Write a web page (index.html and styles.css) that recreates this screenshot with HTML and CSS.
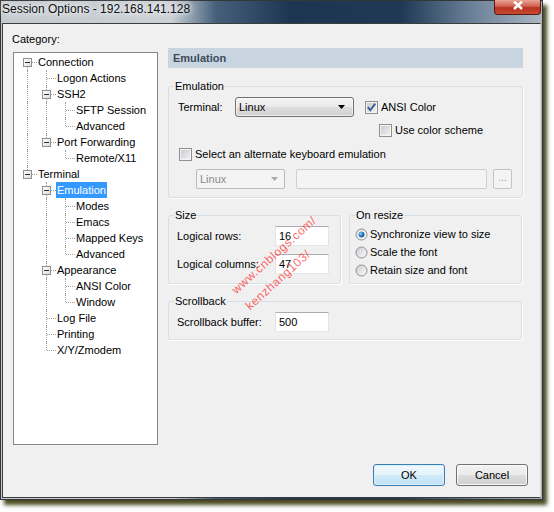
FILE: index.html
```html
<!DOCTYPE html>
<html>
<head>
<meta charset="utf-8">
<link rel="stylesheet" href="styles.css">
</head>
<body>
<svg class="defs" width="0" height="0" aria-hidden="true">
  <defs>
    <linearGradient id="rg" x1="0" y1="0" x2="1" y2="1">
      <stop offset="0" stop-color="#c9ccd1"/>
      <stop offset="1" stop-color="#fbfbfb"/>
    </linearGradient>
    <radialGradient id="rd" cx="0.35" cy="0.35" r="0.75">
      <stop offset="0" stop-color="#8fd3f5"/>
      <stop offset="0.5" stop-color="#2b7fc0"/>
      <stop offset="1" stop-color="#0e3f78"/>
    </radialGradient>
  </defs>
</svg>
<div class="screen">
  <div class="window">
    <div class="titlebar">
      <div class="title">Session Options - 192.168.141.128</div>
      <div class="close">
        <svg width="12" height="9" viewBox="0 0 12 9"><path d="M2 0.5 L10 8 M10 0.5 L2 8" stroke="#fff" stroke-width="2.4" fill="none"/></svg>
      </div>
    </div>
    <div class="client">
      <div class="main">
        <div class="left">
          <div class="cat">Category:</div>
          <div class="tree">
            <div class="trow"><span class="c f"><span class="box"></span></span><span class="tl">Connection</span></div>
            <div class="trow"><span class="c v"></span><span class="c t"></span><span class="tl">Logon Actions</span></div>
            <div class="trow"><span class="c v"></span><span class="c t"><span class="box"></span></span><span class="tl">SSH2</span></div>
            <div class="trow"><span class="c v"></span><span class="c v"></span><span class="c t"></span><span class="tl">SFTP Session</span></div>
            <div class="trow"><span class="c v"></span><span class="c v"></span><span class="c e"></span><span class="tl">Advanced</span></div>
            <div class="trow"><span class="c v"></span><span class="c e"><span class="box"></span></span><span class="tl">Port Forwarding</span></div>
            <div class="trow"><span class="c v"></span><span class="c"></span><span class="c e"></span><span class="tl">Remote/X11</span></div>
            <div class="trow"><span class="c e"><span class="box"></span></span><span class="tl">Terminal</span></div>
            <div class="trow"><span class="c"></span><span class="c t"><span class="box"></span></span><span class="tl sel">Emulation</span></div>
            <div class="trow"><span class="c"></span><span class="c v"></span><span class="c t"></span><span class="tl">Modes</span></div>
            <div class="trow"><span class="c"></span><span class="c v"></span><span class="c t"></span><span class="tl">Emacs</span></div>
            <div class="trow"><span class="c"></span><span class="c v"></span><span class="c t"></span><span class="tl">Mapped Keys</span></div>
            <div class="trow"><span class="c"></span><span class="c v"></span><span class="c e"></span><span class="tl">Advanced</span></div>
            <div class="trow"><span class="c"></span><span class="c t"><span class="box"></span></span><span class="tl">Appearance</span></div>
            <div class="trow"><span class="c"></span><span class="c v"></span><span class="c t"></span><span class="tl">ANSI Color</span></div>
            <div class="trow"><span class="c"></span><span class="c v"></span><span class="c e"></span><span class="tl">Window</span></div>
            <div class="trow"><span class="c"></span><span class="c t"></span><span class="tl">Log File</span></div>
            <div class="trow"><span class="c"></span><span class="c t"></span><span class="tl">Printing</span></div>
            <div class="trow"><span class="c"></span><span class="c e"></span><span class="tl">X/Y/Zmodem</span></div>
          </div>
        </div>
        <div class="right">
          <div class="header">Emulation</div>

          <fieldset class="grp emu">
            <legend>Emulation</legend>
            <div class="row r1">
              <span class="lbl-term">Terminal:</span>
              <div class="combo"><span>Linux</span>
                <svg width="7" height="4" viewBox="0 0 7 4"><path d="M0 0 H7 L3.5 4 Z" fill="#000"/></svg>
              </div>
              <span class="chk">
                <svg width="11" height="11" viewBox="0 0 11 11"><path d="M1.8 5.2 L4.3 8.2 L9.2 1.6" stroke="#3d5a96" stroke-width="1.9" fill="none"/></svg>
              </span>
              <span>ANSI Color</span>
            </div>
            <div class="row r2">
              <span class="chk"></span><span>Use color scheme</span>
            </div>
            <div class="row r3">
              <span class="chk"></span><span>Select an alternate keyboard emulation</span>
            </div>
            <div class="row r4">
              <div class="dcombo"><span>Linux</span>
                <svg width="7" height="4" viewBox="0 0 7 4"><path d="M0 0 H7 L3.5 4 Z" fill="#a8a8a8"/></svg>
              </div>
              <div class="dtext"></div>
              <div class="dots">...</div>
            </div>
          </fieldset>

          <div class="pair">
            <fieldset class="grp size">
              <legend>Size</legend>
              <div class="frow"><span class="flbl">Logical rows:</span><div class="input">16</div></div>
              <div class="frow"><span class="flbl">Logical columns:</span><div class="input">47</div></div>
            </fieldset>
            <fieldset class="grp resize">
              <legend>On resize</legend>
              <div class="rrow">
                <svg class="radio" width="13" height="13" viewBox="0 0 13 13"><circle cx="6.5" cy="6.5" r="5.5" fill="url(#rg)" stroke="#8e8f8f"/><circle cx="6.5" cy="6.5" r="4" fill="#fff"/><circle cx="6.5" cy="6.5" r="3" fill="url(#rd)"/></svg>
                <span>Synchronize view to size</span>
              </div>
              <div class="rrow">
                <svg class="radio" width="13" height="13" viewBox="0 0 13 13"><circle cx="6.5" cy="6.5" r="5.5" fill="url(#rg)" stroke="#8e8f8f"/></svg>
                <span>Scale the font</span>
              </div>
              <div class="rrow">
                <svg class="radio" width="13" height="13" viewBox="0 0 13 13"><circle cx="6.5" cy="6.5" r="5.5" fill="url(#rg)" stroke="#8e8f8f"/></svg>
                <span>Retain size and font</span>
              </div>
            </fieldset>
          </div>

          <fieldset class="grp scroll">
            <legend>Scrollback</legend>
            <div class="frow"><span class="flbl">Scrollback buffer:</span><div class="input">500</div></div>
          </fieldset>
        </div>
      </div>
      <div class="btns">
        <div class="btn def">OK</div>
        <div class="btn">Cancel</div>
      </div>
    </div>
  </div>
  <span class="wm wm1">www.cnblogs.com/</span>
  <span class="wm wm2">kenzhang103/</span>
</div>
</body>
</html>
```
FILE: styles.css
```css
* { box-sizing: border-box; }
html, body { margin: 0; padding: 0; }
body {
  background: #ffffff;
  width: 554px;
  height: 512px;
  overflow: hidden;
  font-family: "Liberation Sans", Arial, sans-serif;
  font-size: 11px;
  color: #000;
}
.defs { position: absolute; width: 0; height: 0; }
.screen { position: relative; width: 554px; height: 512px; }

.window {
  width: 543px;
  height: 500px;
  border: 1px solid #363636;
  background: linear-gradient(to right, #c4cad0 0, #cbd1d7 170px, #46607b 215px, #1c3550 290px, #1f3954 400px, #6a8098 470px, #a9b5c1 540px);
  box-shadow: 4px 5px 4px rgba(58, 58, 14, 0.92);
  display: flex;
  flex-direction: column;
}
.titlebar {
  height: 22px;
  display: flex;
  justify-content: space-between;
  align-items: flex-start;
  flex: none;
}
.title {
  font-size: 12px;
  line-height: 16px;
  padding-left: 1px;
  color: #111;
  text-shadow: 0 0 5px #fff, 0 0 8px #fff;
  white-space: nowrap;
}
.close {
  width: 47px;
  height: 15px;
  margin-right: 1px;
  margin-top: -1px;
  border: 1px solid #5a1a12;
  border-top: none;
  border-radius: 0 0 4px 4px;
  background: linear-gradient(#e9a596, #d0604f 45%, #b8321f 55%, #c74a32);
  display: flex;
  justify-content: center;
  align-items: flex-start;
  padding-top: 1px;
}

.client {
  flex: 1;
  margin: 0 1px 1px;
  background: #f0f0f0;
  border: 1px solid #3c3c3c;
  border-right-color: #d8d8d8;
  display: flex;
  flex-direction: column;
}
.main { display: flex; }
.left { margin-left: 9px; width: 146px; }
.cat { margin-top: 8px; line-height: 14px; }
.tree {
  margin-top: 6px;
  margin-left: 1px;
  width: 145px;
  height: 393px;
  border: 1px solid #828790;
  background: #fff;
  padding: 1px 0 0 4px;
}
.trow { display: flex; height: 16px; align-items: center; }
.c {
  width: 19px;
  height: 16px;
  position: relative;
  flex: none;
  display: flex;
  align-items: flex-start;
}
.c.v::before, .c.t::before, .c.e::before, .c.f::before {
  content: "";
  position: absolute;
  left: 9px;
  top: 0;
  bottom: 0;
  border-left: 1px dotted #a0a0a0;
}
.c.e::before { bottom: auto; height: 8px; }
.c.f::before { top: 8px; }
.c.t::after, .c.e::after, .c.f::after {
  content: "";
  position: absolute;
  left: 10px;
  top: 8px;
  width: 9px;
  border-top: 1px dotted #a0a0a0;
}
.box {
  position: relative;
  z-index: 1;
  margin-left: 5px;
  margin-top: 4px;
  width: 9px;
  height: 9px;
  border: 1px solid #919191;
  background: linear-gradient(135deg, #ffffff, #dcdcdc);
  display: flex;
  align-items: center;
  justify-content: center;
}
.box::after { content: ""; width: 5px; height: 1px; background: #2e2e2e; }
.tl { padding: 0 1px; line-height: 16px; white-space: nowrap; }
.tl.sel { background: #3399ff; color: #fff; }

.right { margin-left: 10px; margin-top: 24px; width: 355px; }
.header {
  height: 20px;
  background: #c8d5e1;
  font-weight: bold;
  color: #3c4b5b;
  padding-left: 5px;
  line-height: 20px;
}
.grp {
  margin: 0;
  border: 1px solid #d5dfe5;
  border-radius: 3px;
  box-shadow: 1px 1px 0 #ffffff;
  min-width: 0;
}
.grp legend { padding: 0 1px; line-height: 14px; }
.emu { margin-top: 11px; padding: 4px 9px 8px; width: 355px; }
.emu legend { margin-left: -4px; }
.row { display: flex; align-items: center; }
.r1 { height: 20px; }
.r2 { height: 14px; margin-top: 6px; padding-left: 201px; }
.r3 { height: 14px; margin-top: 10px; padding-left: 1px; }
.r4 { height: 20px; margin-top: 8px; padding-left: 18px; }
.lbl-term { width: 57px; }
.combo {
  width: 119px;
  height: 20px;
  margin-right: 11px;
  border: 1px solid #707070;
  border-radius: 3px;
  background: linear-gradient(#f3f3f3 0%, #ebebeb 48%, #dddddd 52%, #d0d0d0 100%);
  box-shadow: inset 0 0 0 1px rgba(255,255,255,0.6);
  display: flex;
  align-items: center;
  justify-content: space-between;
  padding: 0 8px 0 3px;
}
.chk {
  width: 13px;
  height: 13px;
  margin-right: 3px;
  border: 1px solid #8e8f8f;
  background: linear-gradient(135deg, #c3c7cd, #f6f6f6);
  box-shadow: inset 0 0 0 1px #f4f4f4;
  display: flex;
  align-items: center;
  justify-content: center;
  flex: none;
}
.dcombo {
  width: 89px;
  height: 20px;
  margin-right: 11px;
  border: 1px solid #b8bcbf;
  border-radius: 2px;
  background: #f4f4f4;
  color: #8a8a8a;
  display: flex;
  align-items: center;
  justify-content: space-between;
  padding: 0 6px 0 3px;
}
.dtext {
  width: 191px;
  height: 20px;
  margin-right: 6px;
  border: 1px solid #cfcfcf;
  border-radius: 2px;
  background: #f4f4f4;
}
.dots {
  width: 19px;
  height: 20px;
  border: 1px solid #c4c4c4;
  border-radius: 2px;
  background: #f4f4f4;
  color: #9a9a9a;
  font-size: 10px;
  line-height: 16px;
  text-align: center;
}

.pair { display: flex; gap: 8px; margin-top: 10px; }
.size { width: 173px; padding: 4px 8px 9px; }
.size legend, .scroll legend { margin-left: -3px; }
.resize { width: 173px; padding: 3px 5px 4px; }
.frow { display: flex; align-items: center; height: 20px; }
.frow + .frow { margin-top: 8px; }
.flbl { width: 98px; white-space: nowrap; }
.input {
  width: 54px;
  height: 20px;
  border: 1px solid;
  border-color: #abadb3 #e2e3ea #e3e9ef #e2e3ea;
  background: #fff;
  padding-left: 3px;
  display: flex;
  align-items: center;
}
.rrow { height: 18px; display: flex; align-items: center; }
.radio { margin-right: 2px; flex: none; }
.scroll { width: 354px; margin-top: 10px; padding: 4px 8px 7px; }

.btns {
  margin-top: auto;
  display: flex;
  justify-content: flex-end;
  gap: 11px;
  padding: 0 12px 11px 0;
}
.btn {
  width: 72px;
  height: 22px;
  border: 1px solid #707070;
  border-radius: 3px;
  background: linear-gradient(#f2f2f2, #ebebeb 50%, #dddddd 50%, #cfcfcf);
  box-shadow: inset 0 0 0 1px #fbfbfb;
  display: flex;
  align-items: center;
  justify-content: center;
}
.btn.def {
  border-color: #3c7fb1;
  background: linear-gradient(#f2f9fd, #e3f2fb 50%, #d0eaf8 50%, #c2e2f5);
  box-shadow: inset 0 0 0 1px #d6f0fd;
}

.wm {
  position: absolute;
  width: 130px;
  text-align: center;
  color: rgba(255, 40, 40, 0.72);
  font-weight: normal;
  font-size: 12px;
  letter-spacing: 0.6px;
  line-height: 14px;
  transform: rotate(-42deg);
  white-space: nowrap;
}
.wm1 { left: 209px; top: 248px; }
.wm2 { left: 213px; top: 273px; }
```
